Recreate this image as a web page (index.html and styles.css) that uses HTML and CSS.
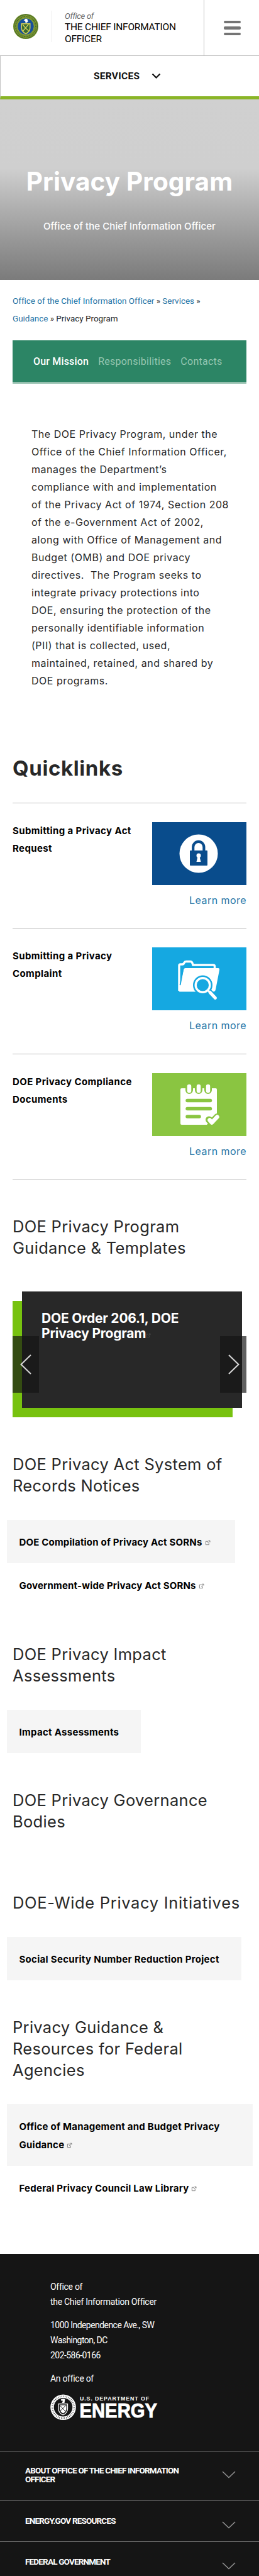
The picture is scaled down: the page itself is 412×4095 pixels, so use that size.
FILE: index.html
```html
<!DOCTYPE html>
<html lang="en">
<head>
<meta charset="utf-8">
<title>Privacy Program</title>
<link rel="stylesheet" href="styles.css">
</head>
<body>
<svg width="0" height="0" class="defs">
  <symbol id="ext" viewBox="0 0 10 10"><path d="M5.5 2.5H1.5V8.5H7V5M4.5 5.5L8.5 1.5M6 1.3H8.9V4" fill="none" stroke="currentColor"/></symbol>
  <symbol id="chev" viewBox="0 0 22 12"><path d="M1 1L11 10.500L21 1" fill="none" stroke="currentColor" stroke-width="1.600"/></symbol>
</svg>

<header class="site-header">
  <div class="brand">
    <svg class="seal" viewBox="0 0 40 40">
      <circle cx="20" cy="20" r="20" fill="#6f8f2a"/>
      <circle cx="20" cy="20" r="18.600" fill="none" stroke="#46672a" stroke-width="1"/>
      <circle cx="20" cy="20" r="16" fill="none" stroke="#a9ad3f" stroke-width="3.500" stroke-dasharray="1.200 1.500"/>
      <circle cx="20" cy="20" r="16" fill="none" stroke="#2e5a2c" stroke-width="2.200" stroke-dasharray="1 1.700"/>
      <circle cx="20" cy="20" r="13.300" fill="#17509c" stroke="#8fa53a" stroke-width="1"/>
      <path d="M16.500 10.500L20 7.500L22.500 8.500L23.500 12.500L21.500 14H19.500L19 11Z" fill="#fff"/>
      <path d="M12.500 15H27.500V22.500Q27.500 29 20 32.500Q12.500 29 12.500 22.500Z" fill="#d5cf55"/>
      <path d="M14 16.500H26V22.500Q26 27.700 20 30.700Q14 27.700 14 22.500Z" fill="#386b35"/>
      <path d="M15 28L24.500 16.500M20 23L15 17M20 23L24.500 27" stroke="#d5cf55" stroke-width="1.300"/>
    </svg>
    <div class="brand-name">
      <span class="brand-kicker">Office of</span>
      <span>THE CHIEF INFORMATION<br>OFFICER</span>
    </div>
  </div>
  <div class="menu"><span></span><span></span><span></span></div>
</header>
<nav class="services">
  <span>SERVICES</span>
  <svg width="15" height="10" viewBox="0 0 15 10"><path d="M1.500 1.500L7.500 7.500L13.500 1.500" fill="none" stroke="#111" stroke-width="2.200"/></svg>
</nav>

<section class="hero">
  <h1>Privacy Program</h1>
  <p>Office of the Chief Information Officer</p>
</section>

<main>
  <div class="crumbs"><a>Office of the Chief Information Officer</a> » <a>Services</a> »<br><a>Guidance</a> » Privacy Program</div>
  <div class="tabs"><span class="tab active">Our Mission</span><span class="tab">Responsibilities</span><span class="tab">Contacts</span></div>

  <p class="intro">The DOE Privacy Program, under the<br>Office of the Chief Information Officer,<br>manages the Department’s<br>compliance with and implementation<br>of the Privacy Act of 1974, Section 208<br>of the e-Government Act of 2002,<br>along with Office of Management and<br>Budget (OMB) and DOE privacy<br>directives.&nbsp; The Program seeks to<br>integrate privacy protections into<br>DOE, ensuring the protection of the<br>personally identifiable information<br>(PII) that is collected, used,<br>maintained, retained, and shared by<br>DOE programs.</p>

  <h2 class="quick-title">Quicklinks</h2>
  <div class="quick-list">
    <article class="quick">
      <h3>Submitting a Privacy Act<br>Request</h3>
      <div class="quick-side">
        <svg class="thumb" viewBox="0 0 150 100">
          <rect width="150" height="100" fill="#094c8c"/>
          <circle cx="74" cy="50" r="30.500" fill="#fff"/>
          <path d="M65.200 46V39.500A8.600 8.600 0 0 1 82.400 39.500V46" fill="none" stroke="#094c8c" stroke-width="4.200"/>
          <rect x="60" y="45" width="28" height="24" rx="1" fill="#094c8c"/>
          <circle cx="74" cy="53" r="3.500" fill="#fff"/>
          <path d="M72.700 54H75.300L77.500 63H70.500Z" fill="#fff"/>
        </svg>
        <a>Learn more</a>
      </div>
    </article>
    <article class="quick tall">
      <h3>Submitting a Privacy<br>Complaint</h3>
      <div class="quick-side">
        <svg class="thumb" viewBox="0 0 150 100">
          <rect width="150" height="100" fill="#15a8e1"/>
          <path d="M43 69V29Q43 27 45 27H48Q50 27 51 24.500Q52 22.500 54 22.500H61Q63 22.500 64 25L65 28H97Q99.500 28 99.500 30.500V35" fill="none" stroke="#fff" stroke-width="3.400"/>
          <path d="M53 33H105Q107.500 33 107 36L101 67Q100.300 70.500 97 70.500H44Q42 70.500 43 67L50 36Q50.600 33 53 33Z" fill="#fff"/>
          <path d="M44.500 60L49 36" stroke="#15a8e1" stroke-width="1.800"/>
          <path d="M88 68L101 80" stroke="#15a8e1" stroke-width="9" />
          <circle cx="80.500" cy="60" r="15.500" fill="#15a8e1"/>
          <circle cx="80.500" cy="60" r="11.300" fill="none" stroke="#fff" stroke-width="3.400"/>
          <path d="M88.500 68L92 71.500" stroke="#fff" stroke-width="3"/>
          <path d="M92 71.500L100.500 80.500" stroke="#fff" stroke-width="5" stroke-linecap="round"/>
        </svg>
        <a>Learn more</a>
      </div>
    </article>
    <article class="quick">
      <h3>DOE Privacy Compliance<br>Documents</h3>
      <div class="quick-side">
        <svg class="thumb" viewBox="0 0 150 100">
          <rect width="150" height="100" fill="#8ac541"/>
          <path d="M47 24H101Q103 24 103 26V66L87 82H47Q45 82 45 80V26Q45 24 47 24Z" fill="#fff"/>
          <g stroke="#8ac541" stroke-width="12" stroke-linecap="round"><path d="M59 19V27M74 19V27M89 19V27"/></g>
          <g stroke="#fff" stroke-width="6.500" stroke-linecap="round"><path d="M59 21V28M74 21V28M89 21V28"/></g>
          <g stroke="#8ac541" stroke-width="5.500" stroke-linecap="round"><path d="M56 43.500H92.500M56 56.500H92.500M56 69H75"/></g>
          <path d="M90.500 74L95 78.500L103.500 69.500" fill="none" stroke="#8ac541" stroke-width="11" stroke-linecap="round" stroke-linejoin="round"/>
          <path d="M91.500 74.500L95 78.500L103.500 69.500" fill="none" stroke="#fff" stroke-width="6.500" stroke-linecap="round" stroke-linejoin="round"/>
        </svg>
        <a>Learn more</a>
      </div>
    </article>
  </div>

  <h2 class="first">DOE Privacy Program<br>Guidance &amp; Templates</h2>
  <div class="carousel">
    <div class="slide">DOE Order 206.1, DOE<br>Privacy Program<svg class="slide-ext" width="8" height="8"><use href="#ext"/></svg></div>
    <div class="arrow prev"><svg width="20" height="34" viewBox="0 0 20 34"><path d="M18 2L2.500 17L18 32" fill="none" stroke="#d8d8d8" stroke-width="2"/></svg></div>
    <div class="arrow next"><svg width="20" height="34" viewBox="0 0 20 34"><path d="M2 2L17.500 17L2 32" fill="none" stroke="#d8d8d8" stroke-width="2"/></svg></div>
  </div>

  <h2 class="sorns">DOE Privacy Act System of<br>Records Notices</h2>
  <ul class="links w-sorn">
    <li>DOE Compilation of Privacy Act SORNs<svg class="ext" width="9" height="9"><use href="#ext"/></svg></li>
    <li>Government-wide Privacy Act SORNs<svg class="ext" width="9" height="9"><use href="#ext"/></svg></li>
  </ul>

  <h2 class="impact">DOE Privacy Impact<br>Assessments</h2>
  <ul class="links w-impact"><li>Impact Assessments</li></ul>

  <h2>DOE Privacy Governance<br>Bodies</h2>

  <h2 class="wide">DOE-Wide Privacy Initiatives</h2>
  <ul class="links w-ssn"><li>Social Security Number Reduction Project</li></ul>

  <h2>Privacy Guidance &amp;<br>Resources for Federal<br>Agencies</h2>
  <ul class="links w-omb">
    <li>Office of Management and Budget Privacy<br>Guidance<svg class="ext" width="9" height="9"><use href="#ext"/></svg></li>
    <li>Federal Privacy Council Law Library<svg class="ext" width="9" height="9"><use href="#ext"/></svg></li>
  </ul>
</main>

<footer>
  <div class="contact">
    <p>Office of<br>the Chief Information Officer</p>
    <p class="address">1000 Independence Ave., SW<br>Washington, DC<br>202-586-0166</p>
    <p>An office of</p>
    <svg class="energy" width="180" height="42" viewBox="0 0 180 42">
      <circle cx="20.500" cy="20.800" r="20.300" fill="#fff"/>
      <circle cx="20.500" cy="20.800" r="17.300" fill="none" stroke="#151515" stroke-width="2.600" stroke-dasharray=".7 2"/>
      <circle cx="20.500" cy="20.800" r="14.800" fill="#151515"/>
      <path d="M17.500 10.500L17 8L21 7L23.500 8L22.500 14H18.500L20 10.500Z" fill="#fff"/>
      <path d="M13 15.500H27.500V23Q27.500 30 20.250 33Q13 30 13 23Z" fill="none" stroke="#fff" stroke-width="1.300"/>
      <path d="M15.200 17.500H25.500V23Q25.500 27.500 20.300 30.500Q15.200 27.500 15.200 23Z" fill="#fff"/>
      <path d="M15.500 27L25 17.500M20 23L16 18.500M20 23L24 27" stroke="#151515"/>
      <text x="47" y="9.900" class="dept" textLength="110">U.S. DEPARTMENT OF</text>
      <text x="46.500" y="37.300" class="nrg" textLength="123.500" lengthAdjust="spacingAndGlyphs">ENERGY</text>
    </svg>
  </div>
  <div class="fold first-fold"><span>ABOUT OFFICE OF THE CHIEF INFORMATION<br>OFFICER</span><svg width="22" height="12"><use href="#chev"/></svg></div>
  <div class="fold"><span>ENERGY.GOV RESOURCES</span><svg width="22" height="12"><use href="#chev"/></svg></div>
  <div class="fold last"><span>FEDERAL GOVERNMENT</span><svg width="22" height="12"><use href="#chev"/></svg></div>
</footer>
</body>
</html>
```
FILE: styles.css
```css
* { box-sizing: border-box; }
body { margin: 0; width: 412px; background: #fff; color: #282828; font-family: Inter, "Liberation Sans", sans-serif; white-space: nowrap; }
h1, h2, h3, p, ul { margin: 0; padding: 0; font-weight: 400; }
ul { list-style: none; }
a { color: #2775a6; }
svg { display: block; flex: none; }
.defs { position: absolute; }
.site-header, .services, .crumbs, .tabs, footer { font-family: Roboto, "Liberation Sans", sans-serif; }

.site-header { display: flex; height: 89px; border-bottom: 1px solid #bdbdbd; }
.brand { display: flex; width: 325px; padding-left: 21px; border-right: 1px solid #bdbdbd; }
.seal { width: 40px; height: 40px; margin-top: 22px; }
.brand-name { display: flex; flex-direction: column; height: 50px; margin: 17px 0 0 20px; padding-left: 21px; border-left: 1px solid #f1f1f1; color: #000; font-size: 15.5px; line-height: 19px; letter-spacing: -.23px; }
.brand-kicker { color: #666; font-size: 13px; font-style: italic; line-height: 17px; letter-spacing: -.3px; }
.menu { display: flex; flex: 1; flex-direction: column; align-items: center; gap: 5px; padding: 33px 0 0 1px; }
.menu span { width: 27px; height: 4.4px; border-radius: 2px; background: #757575; }

.services { display: flex; align-items: center; gap: 19px; height: 69px; padding: 0 0 0 148px; border-bottom: 5px solid #8ab527; border-left: 1px solid #c4c4c4; color: #111; font-size: 15.5px; font-weight: 700; letter-spacing: .27px; }

.hero { height: 287px; padding-top: 107px; background: linear-gradient(#d0d0d0 0, #cfcfcf 38%, #adadad 62%, #8f8f8f 84%, #7b7b7b); color: #fff; text-align: center; }
.hero h1 { font-size: 40.5px; font-weight: 700; line-height: 48px; letter-spacing: .1px; }
.hero p { margin-top: 35px; font-size: 15px; font-weight: 500; line-height: 24px; letter-spacing: .07px; }

.crumbs { margin: 19px 0 0 20px; font-size: 13.5px; line-height: 28px; letter-spacing: -.03px; }
.tabs { display: flex; gap: 15px; align-items: center; height: 69px; margin: 21px 20px 0; padding-left: 33px; border-bottom: 3px solid #94bfae; background: #2c8565; color: #95c5b1; font-size: 16px; letter-spacing: .25px; }
.tab.active { color: #fff; font-weight: 500; letter-spacing: .18px; }

.intro { margin: 66px 0 0 50px; font-size: 16px; line-height: 28px; letter-spacing: .53px; }
.quick-title { margin: 105px 0 35px 20px; font-size: 33px; font-weight: 700; line-height: 40px; letter-spacing: .6px; }
.quick-list { margin: 0 20px; border-bottom: 1px solid #bcbcbc; }
.quick { display: flex; justify-content: space-between; height: 199px; padding-top: 30px; border-top: 1px solid #bcbcbc; }
.quick.tall { height: 200px; }
.quick h3 { color: #000; font-size: 15px; font-weight: 700; line-height: 28px; letter-spacing: .39px; }
.quick-side { display: flex; flex-direction: column; align-items: flex-end; gap: 10px; }
.thumb { width: 150px; height: 100px; }
.quick-side a { font-size: 16px; line-height: 28px; letter-spacing: .45px; }

h2 { margin: 58px 0 0 20px; font-size: 25.5px; line-height: 34px; letter-spacing: .3px; }
h2.impact { margin-top: 59px; }
h2.wide { margin-top: 95px; letter-spacing: .68px; }

.carousel { position: relative; height: 200px; margin: 52px 20px 0; padding-left: 15px; }
.carousel::before { content: ""; position: absolute; z-index: -1; left: 0; top: 15px; width: 350px; height: 185px; background: #77c20f; }
.slide { width: 350px; height: 185px; padding: 31px; background: #282828; color: #fff; font-size: 21px; font-weight: 700; line-height: 24px; letter-spacing: -.22px; }
.slide-ext { display: inline-block; color: #4a4a4a; }
.arrow { position: absolute; top: 71px; width: 42px; height: 90px; display: flex; align-items: center; background: rgba(20, 20, 20, .68); }
.prev { left: 0; padding-left: 11px; }
.next { right: 0; padding-left: 12px; }

.links { margin: 37px 0 0 10.5px; color: #000; font-size: 15px; font-weight: 700; line-height: 29px; letter-spacing: .3px; }
.links li { padding: 21px 0 19px 20px; }
.links li:first-child { background: #f5f5f5; }
.w-sorn { width: 363.5px; letter-spacing: .19px; }
.w-impact { width: 213.5px; }
.w-ssn { width: 373.5px; }
.w-omb { width: 391.5px; letter-spacing: .24px; }
.ext { display: inline-block; margin-left: 4px; color: #777; vertical-align: 0; }

footer { height: 512px; margin-top: 71px; overflow: hidden; background: #151515; color: #fff; }
.contact { height: 313px; padding: 39.5px 0 0 80px; font-size: 14px; font-weight: 500; line-height: 24px; letter-spacing: -.3px; }
.contact p { margin-bottom: 13px; }
.contact .address { letter-spacing: -.55px; }
.energy { overflow: visible; }
.dept { fill: #fff; font: 700 8.800px "Liberation Sans", sans-serif; letter-spacing: normal; }
.nrg { fill: #fff; stroke: #fff; stroke-width: .9px; font: 700 32px "Liberation Sans", sans-serif; letter-spacing: normal; }
.fold { display: flex; justify-content: space-between; height: 65px; padding: 24px 37px 0 40px; border-top: 1px solid #858585; font-size: 13.5px; font-weight: 700; line-height: 14.3px; letter-spacing: -.82px; }
.first-fold { height: 79px; padding-top: 23px; }
.fold svg { margin-top: 8px; color: #909090; }
```
